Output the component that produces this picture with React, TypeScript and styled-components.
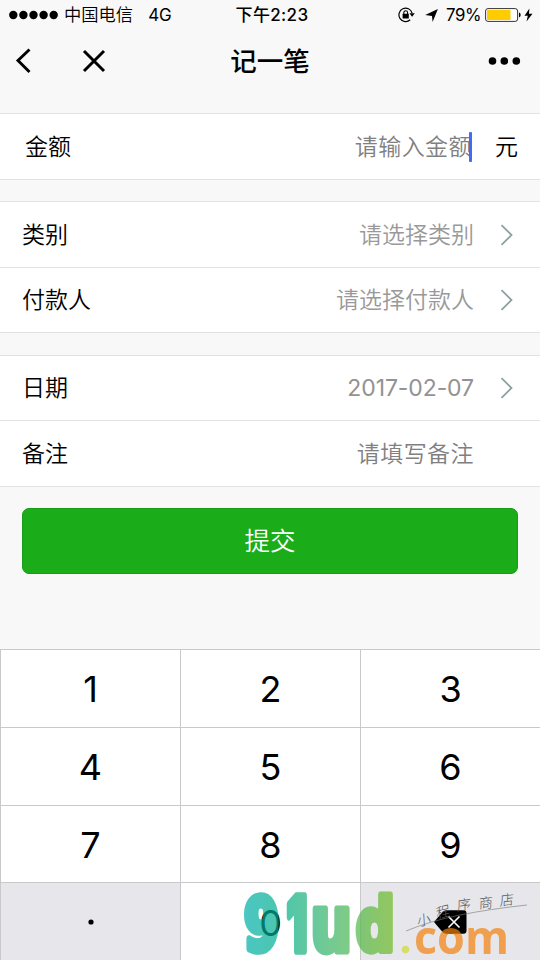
import React from 'react';
import styled, { createGlobalStyle } from 'styled-components';

const GlobalStyle = createGlobalStyle`
  * { box-sizing: border-box; }
  body { margin: 0; background: #f8f8f8; }
`;

const Screen = styled.div`
  position: relative;
  display: flex;
  flex-direction: column;
  width: 540px;
  height: 960px;
  overflow: hidden;
  background: #f8f8f8;
  color: #000;
  font-family: Inter, 'Noto Sans CJK SC', sans-serif;
`;

const StatusBar = styled.header`
  display: grid;
  grid-template-columns: 1fr auto 1fr;
  align-items: center;
  height: 30px;
  padding: 0 7px 0 9px;
  font-size: 17px;
  line-height: 30px;
`;

const StatusGroup = styled.div<{ $end?: boolean }>`
  display: flex;
  align-items: center;
  justify-content: ${(p) => (p.$end ? 'flex-end' : 'flex-start')};
`;

const Signal = styled.svg`
  width: 50px;
  height: 10px;
  margin-right: 5px;
`;

const Carrier = styled.span`
  margin-right: 15px;
  font-size: 17.3px;
  font-weight: 350;
`;

const Clock = styled.time`
  margin-left: 2px;
  font-size: 17px;
  font-weight: 500;
  letter-spacing: 0.35px;
`;

const Indicators = styled.span`
  display: flex;
  align-items: center;
  gap: 10px;
`;

const Percent = styled.span`
  margin: 0 4px 0 8px;
  font-size: 16.8px;
  letter-spacing: -0.4px;
`;

const NavBar = styled.nav`
  display: grid;
  grid-template-columns: 120px 1fr 120px;
  align-items: center;
  height: 62px;
  padding: 0 19px 0 15px;
`;

const NavActions = styled.div<{ $end?: boolean }>`
  display: flex;
  align-items: center;
  gap: 50px;
  justify-content: ${(p) => (p.$end ? 'flex-end' : 'flex-start')};
`;

const Title = styled.h1`
  margin: 0 0 0 4px;
  text-align: center;
  font-size: 26.5px;
  line-height: 40px;
  font-weight: 500;
`;

const Form = styled.main`
  display: flex;
  flex-direction: column;
  gap: 21px;
  padding-top: 21px;
  height: 557px;
`;

const Group = styled.section<{ $offset?: number }>`
  margin-top: ${(p) => p.$offset ?? 0}px;
  border-top: 1px solid #e2e2e2;
  border-bottom: 1px solid #e2e2e2;
  background: #fff;
`;

const Row = styled.div<{ $height: number; $inset?: number }>`
  display: flex;
  align-items: center;
  height: ${(p) => p.$height}px;
  padding: 0 22px 0 ${(p) => p.$inset ?? 22}px;
  font-size: 23px;
  font-weight: 350;
  line-height: 34px;

  & + & { border-top: 1px solid #e2e2e2; }
`;

const Label = styled.label`
  flex: 1;
`;

const Value = styled.span<{ $dark?: boolean; $wide?: boolean }>`
  color: ${(p) => (p.$dark ? '#808080' : '#999')};
  letter-spacing: ${(p) => (p.$wide ? '0.45px' : '0')};
`;

const DateValue = styled(Value)`
  font-weight: 400;
  letter-spacing: -0.1px;
  color: #929292;
`;

const Caret = styled.i`
  width: 3px;
  height: 30px;
  margin: 0 23px 0 -3px;
  border-radius: 1px;
  background: #426bf2;
`;

const Trailing = styled.span`
  display: flex;
  justify-content: flex-end;
  width: 44px;
  padding-right: 5px;
`;

const Submit = styled.button`
  height: 66px;
  margin: 0 22px;
  padding: 0;
  border: 1px solid #189c18;
  border-radius: 7px;
  background: #1aad19;
  color: #fff;
  font: 350 25.5px/62px Inter, 'Noto Sans CJK SC', sans-serif;
`;

const Keypad = styled.section`
  display: grid;
  grid-template-columns: repeat(3, 180px);
  grid-template-rows: repeat(4, 77.75px);
`;

const Key = styled.button<{ $muted?: boolean }>`
  display: flex;
  align-items: center;
  justify-content: center;
  padding: ${(p) => (p.$muted ? 0 : 2)}px 0 0;
  border: 0 solid #c9c9cb;
  border-width: 1px 0 0 1px;
  background: ${(p) => (p.$muted ? '#e6e6eb' : '#fff')};
  color: #000;
  font: 400 36px/44px Inter, sans-serif;
`;

const Watermark = styled.svg`
  position: absolute;
  left: 235px;
  top: 885px;
  width: 305px;
  height: 75px;
  pointer-events: none;
`;

const Chevron = () => (
  <svg width="13" height="22" viewBox="0 0 13 22" fill="none" stroke="#8da1a1" strokeWidth="1.8">
    <path d="M1.5 1.2 11.5 11 1.5 20.8" />
  </svg>
);

const RotationLock = () => (
  <svg width="17" height="16" viewBox="0 0 17 16">
    <path d="M14.1 6.1A6.7 6.7 0 1 0 12.2 12.8" fill="none" stroke="#000" strokeWidth="1.2" />
    <path d="M11.4 6.2h5.4l-2.7 3.5z" />
    <path d="M5.8 7V5.7a1.9 1.9 0 0 1 3.8 0V7" fill="none" stroke="#000" strokeWidth="1.1" />
    <rect x="4.6" y="6.7" width="6.2" height="4.7" rx=".5" />
  </svg>
);

const LocationArrow = () => (
  <svg width="13" height="13" viewBox="0 0 13 13">
    <path d="M12.9 0 7.6 12.9 7 6.9 .2 5.900z" />
  </svg>
);

const Battery = () => (
  <svg width="48" height="16" viewBox="0 0 48 16">
    <rect x=".6" y="1.6" width="32" height="12.8" rx="2.4" fill="#fff" stroke="#333" strokeWidth="1" />
    <rect x="2" y="3" width="23.5" height="10" rx="1" fill="#fc0" />
    <path d="M34 5.6q1.7.4 1.7 2.4T34 10.4z" />
    <path d="M44.4 1.5 39.5 8.7h3.3l-1.3 5.8 6-7.8h-3.5z" />
  </svg>
);

const Backspace = () => (
  <svg width="33" height="24" viewBox="0 0 33 24">
    <path d="M0 12 8.5 2Q10 .3 12 .3H29.500q3 0 3 3v17.400q0 3-3 3H12Q10 23.700 8.500 22z" />
    <path d="M14.500 6.500 25.500 17.500M25.500 6.500 14.500 17.500" stroke="#fff" strokeWidth="1.6" />
  </svg>
);

const logoGlyphs = [
  { char: '9', x: 244, y: 950, sx: 0.66, sy: 0.94, stroke: 6.5, font: "'DejaVu Sans'" },
  { char: '1', x: 287, y: 951, sx: 0.57, sy: 0.98, stroke: 6, font: 'Inter' },
  { char: 'u', x: 310.7, y: 950.5, sx: 0.75, sy: 1, stroke: 6, font: "'DejaVu Sans'" },
  { char: 'd', x: 355.7, y: 950.5, sx: 0.71, sy: 0.95, stroke: 6, font: "'DejaVu Sans'" },
];

const handwritten = [
  { char: '小', x: 424, y: 920, turn: -12 },
  { char: '程', x: 443, y: 912, turn: -14 },
  { char: '序', x: 464, y: 905, turn: -8 },
  { char: '商', x: 486, y: 903, turn: -6 },
  { char: '店', x: 507, y: 900, turn: -6 },
];

const SiteMark = () => (
  <Watermark viewBox="235 885 305 75">
    <defs>
      <linearGradient id="brand" gradientUnits="userSpaceOnUse" x1="243" y1="0" x2="393" y2="0">
        <stop offset="0" stopColor="#00aeaa" />
        <stop offset=".25" stopColor="#00ae8c" />
        <stop offset=".55" stopColor="#35b46a" />
        <stop offset="1" stopColor="#70bb24" />
      </linearGradient>
      <mask id="brandMask" maskUnits="userSpaceOnUse" x="235" y="885" width="170" height="75">
        <g fill="#fff" stroke="#fff" strokeLinejoin="round" fontWeight="900" fontSize="77">
          {logoGlyphs.map((g) => (
            <text
              key={g.char}
              fontFamily={`${g.font}, sans-serif`}
              strokeWidth={g.stroke}
              vectorEffect="non-scaling-stroke"
              transform={`translate(${g.x} ${g.y}) scale(${g.sx} ${g.sy})`}
            >
              {g.char}
            </text>
          ))}
        </g>
      </mask>
    </defs>
    <path d="M406 931Q430 921 460 915T527 905" fill="none" stroke="#777" strokeWidth=".6" />
    <g fill="#555" fontFamily="'Noto Sans CJK SC', sans-serif" fontWeight="300" fontSize="14" textAnchor="middle">
      {handwritten.map((h) => (
        <text key={h.char} transform={`translate(${h.x} ${h.y}) rotate(${h.turn}) skewX(-8)`} y="5">
          {h.char}
        </text>
      ))}
    </g>
    <g opacity=".7">
      <rect x="235" y="885" width="170" height="75" fill="url(#brand)" mask="url(#brandMask)" />
      <circle cx="405.500" cy="949.500" r="3.800" fill="#d0dc34" />
      <text
        x="414"
        y="953.500"
        fill="#f3820b"
        fontFamily="'Open Sans', sans-serif"
        fontWeight="700"
        fontSize="46.5"
        textLength="95"
        lengthAdjust="spacingAndGlyphs"
      >
        com
      </text>
    </g>
  </Watermark>
);

export default function App() {
  return (
    <Screen>
      <GlobalStyle />
      <StatusBar>
        <StatusGroup>
          <Signal viewBox="0 0 50 10">
            {[4.3, 14.4, 24.5, 34.6, 44.7].map((cx) => (
              <circle key={cx} cx={cx} cy="5" r="4.200" />
            ))}
          </Signal>
          <Carrier>中国电信</Carrier>
          <span>4G</span>
        </StatusGroup>
        <Clock>下午2:23</Clock>
        <StatusGroup $end>
          <Indicators>
            <RotationLock />
            <LocationArrow />
          </Indicators>
          <Percent>79%</Percent>
          <Battery />
        </StatusGroup>
      </StatusBar>

      <NavBar>
        <NavActions>
          <svg width="17" height="26" viewBox="0 0 17 26" fill="none" stroke="#000" strokeWidth="2.900">
            <path d="M14.500 1.500 3 12.500 14.500 24" />
          </svg>
          <svg width="24" height="24" viewBox="0 0 24 24" fill="none" stroke="#000" strokeWidth="3">
            <path d="M2 2 22 22M22 2 2 22" />
          </svg>
        </NavActions>
        <Title>记一笔</Title>
        <NavActions $end>
          <svg width="33" height="8" viewBox="0 0 33 8">
            <circle cx="4.500" cy="4" r="3.800" />
            <circle cx="16.300" cy="4" r="3.800" />
            <circle cx="28.300" cy="4" r="3.800" />
          </svg>
        </NavActions>
      </NavBar>

      <Form>
        <Group>
          <Row $height={65} $inset={25}>
            <Label>金额</Label>
            <Value $dark $wide>请输入金额</Value>
            <Caret />
            <span>元</span>
          </Row>
        </Group>
        <Group>
          <Row $height={65}>
            <Label>类别</Label>
            <Value>请选择类别</Value>
            <Trailing><Chevron /></Trailing>
          </Row>
          <Row $height={65}>
            <Label>付款人</Label>
            <Value>请选择付款人</Value>
            <Trailing><Chevron /></Trailing>
          </Row>
        </Group>
        <Group $offset={1}>
          <Row $height={64}>
            <Label>日期</Label>
            <DateValue>2017-02-07</DateValue>
            <Trailing><Chevron /></Trailing>
          </Row>
          <Row $height={66}>
            <Label>备注</Label>
            <Value $dark $wide>请填写备注</Value>
            <Trailing />
          </Row>
        </Group>
        <Submit>提交</Submit>
      </Form>

      <Keypad>
        {['1', '2', '3', '4', '5', '6', '7', '8', '9'].map((n) => (
          <Key key={n}>{n}</Key>
        ))}
        <Key $muted>
          <svg width="6" height="6" viewBox="0 0 6 6">
            <circle cx="3" cy="3" r="2.600" />
          </svg>
        </Key>
        <Key>0</Key>
        <Key $muted><Backspace /></Key>
      </Keypad>
      <SiteMark />
    </Screen>
  );
}
